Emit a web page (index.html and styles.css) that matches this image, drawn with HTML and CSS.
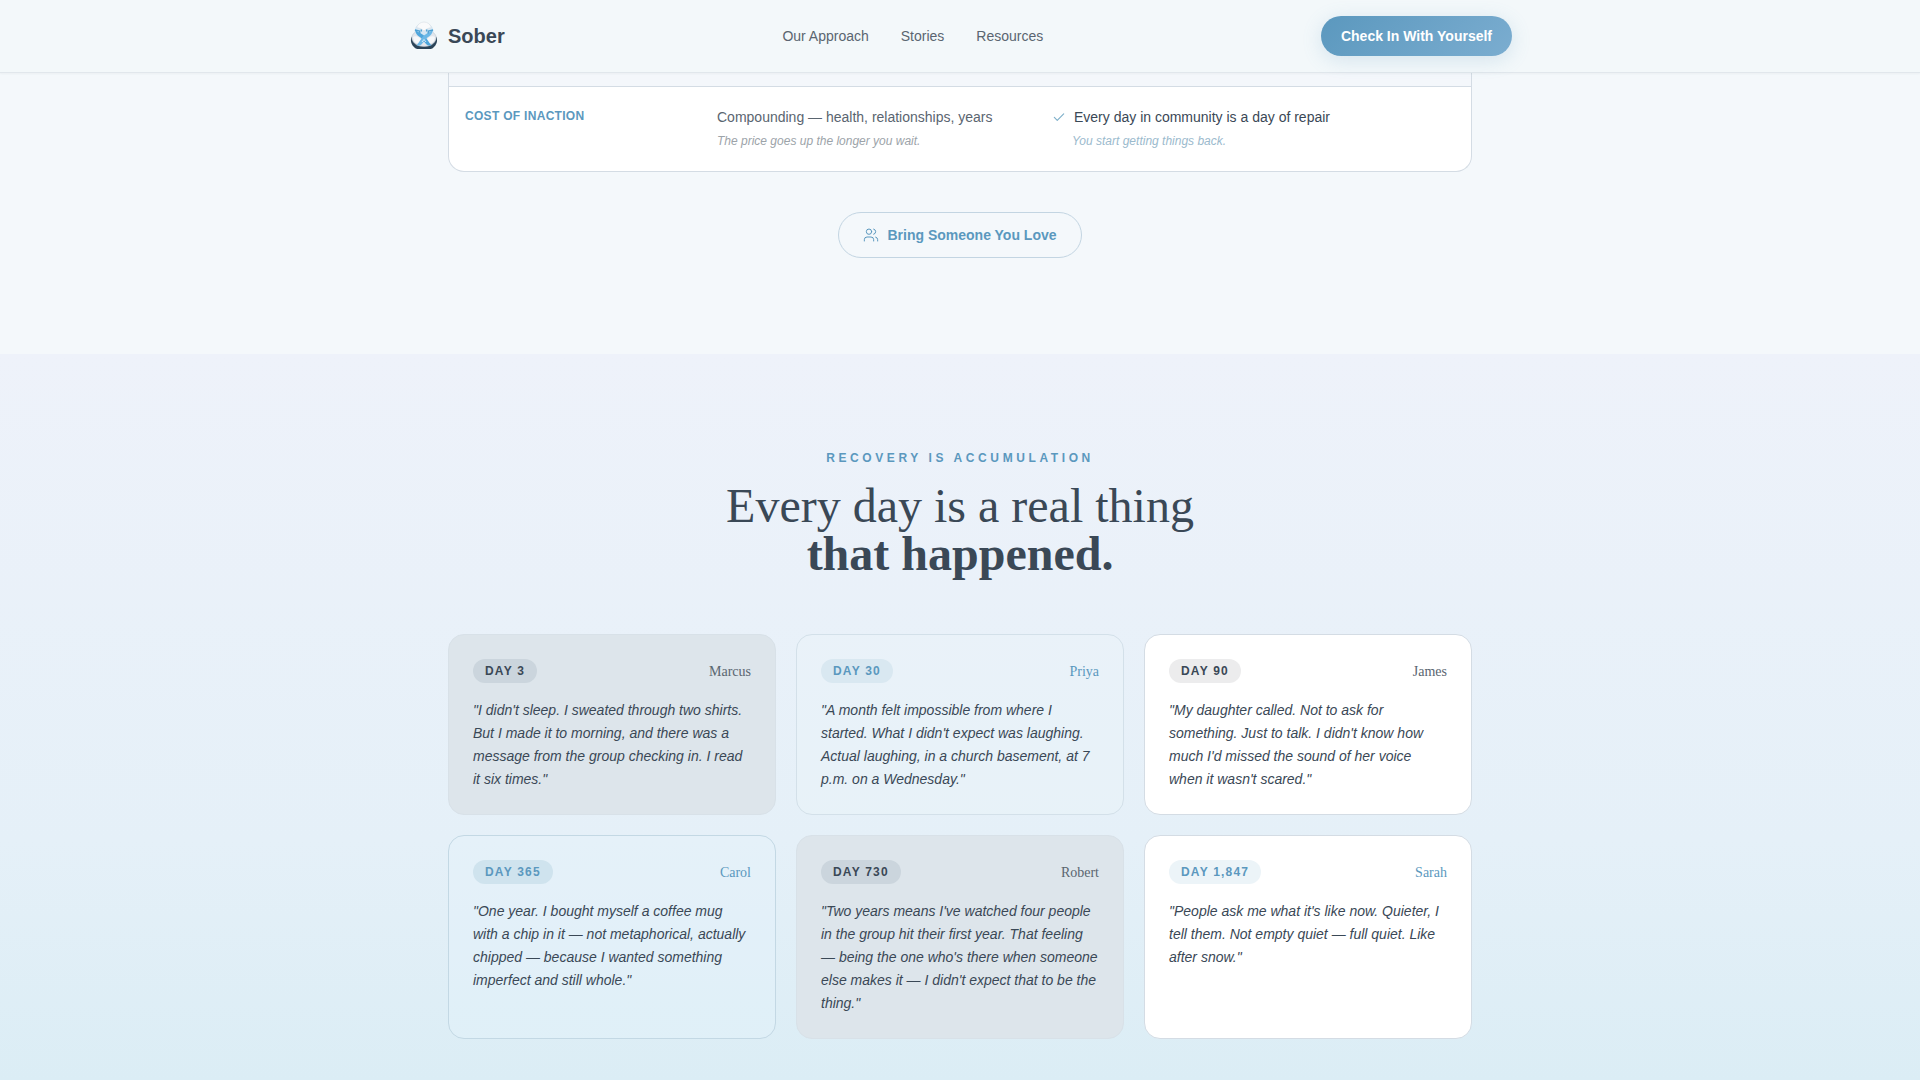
FILE: index.html
```html
<!DOCTYPE html>
<html lang="en">
<head>
<meta charset="utf-8">
<meta name="viewport" content="width=device-width, initial-scale=1">
<title>Sober</title>
<link rel="stylesheet" href="styles.css">
</head>
<body>
<header class="site-header">
  <div class="header-inner">
    <a class="brand" href="#">
      <svg class="brand-mark" viewBox="0 0 32 32" aria-hidden="true">
        <path d="M3.5 16.500c-1.500 5 0 8.500 3.500 11.500 1 .8 2 1 3 1h12c1 0 2-.2 3-1 3.500-3 5-6.500 3.500-11.500-1 5-5 9.500-12.500 9.500S4.500 21.500 3.500 16.500z" fill="#2b4458"/>
        <path d="M9 11.500c-3.500 1-5.500 4-5 7.500 1 4.500 6 7.500 12 7.500s11-3 12-7.500c.5-3.500-1.500-6.500-5-7.500z" fill="#e2e6ec" stroke="#b9c4cf" stroke-width=".6"/>
        <path d="M5 17c3-2 7 0 9 4-2 3-6 3-8 0zM27 17c-3-2-7 0-9 4 2 3 6 3 8 0z" fill="#f6f8fa"/>
        <path d="M16 3c5 0 8.800 3 9.500 7.500C25.500 14 21 17 16 19c-5-2-9.500-5-9.500-8.500C7.200 6 11 3 16 3z" fill="#d6e7f3"/>
        <path d="M8.500 7.500C10 4 12.500 2 16 2s6 2 7.500 5.500c-3 .5-5.500 1.500-7.500 3.500-2-2-4.500-3-7.500-3.500z" fill="#f9fafb" stroke="#d5dde4" stroke-width=".6"/>
        <path d="M7 9.500c1 6.500 4 6 7 9.500 2 2.200 3.500 5 6 6.500h3.500c-3-3.500-4-6-6.500-9C14.500 13.500 11 13 7 9.500z" fill="#4fa6dc"/>
        <path d="M25 9.500c-1 6.500-4 6-7 9.500-2 2.200-3.500 5-6 6.500H8.500c3-3.500 4-6 6.500-9 2.500-3 6-3.500 10-7z" fill="#6cb8e6"/>
        <path d="M7 10l4.500 1 .5 2.500M25 10l-4.500 1-.5 2.500M13 9.500l.5 2M19 9.500l-.5 2" fill="none" stroke="#4b9fd3" stroke-width="1.300"/>
        <path d="M14 22l2-2.500 2 2.500" fill="none" stroke="#eef8fd" stroke-width=".8"/>
      </svg>
      <span>Sober</span>
    </a>
    <nav class="site-nav" aria-label="Main">
      <a href="#">Our Approach</a>
      <a href="#">Stories</a>
      <a href="#">Resources</a>
    </nav>
    <button class="check-in" type="button">Check In With Yourself</button>
  </div>
</header>
<main>
  <section class="compare">
    <div class="container">
      <div class="table-frame">
        <table class="compare-table">
          <tbody>
            <tr class="previous"><td></td><td></td><td></td></tr>
            <tr>
              <th scope="row">COST OF INACTION</th>
              <td class="alone">
                <p class="point">Compounding — health, relationships, years</p>
                <p class="note">The price goes up the longer you wait.</p>
              </td>
              <td class="together">
                <p class="point">
                  <svg class="check" viewBox="0 0 24 24" aria-hidden="true"><path d="M20 5 9 16l-5-5"/></svg>
                  Every day in community is a day of repair
                </p>
                <p class="note">You start getting things back.</p>
              </td>
            </tr>
          </tbody>
        </table>
      </div>
      <button class="bring" type="button">
        <svg class="users" viewBox="0 0 24 24" aria-hidden="true"><path d="M16 21v-2a4 4 0 0 0-4-4H6a4 4 0 0 0-4 4v2"/><circle cx="9" cy="7" r="4"/><path d="M22 21v-2a4 4 0 0 0-3-3.87M16 3.13a4 4 0 0 1 0 7.75"/></svg>
        Bring Someone You Love
      </button>
    </div>
  </section>
  <section class="days">
    <div class="container">
      <p class="eyebrow">RECOVERY IS ACCUMULATION</p>
      <h2>Every day is a real thing<br><strong>that happened.</strong></h2>
      <div class="cards">
        <article class="card stone">
          <div class="card-top"><span class="badge">DAY 3</span><span class="name">Marcus</span></div>
          <blockquote>"I didn't sleep. I sweated through two shirts. But I made it to morning, and there was a message from the group checking in. I read it six times."</blockquote>
        </article>
        <article class="card mist">
          <div class="card-top"><span class="badge">DAY 30</span><span class="name">Priya</span></div>
          <blockquote>"A month felt impossible from where I started. What I didn't expect was laughing. Actual laughing, in a church basement, at 7 p.m. on a Wednesday."</blockquote>
        </article>
        <article class="card paper">
          <div class="card-top"><span class="badge">DAY 90</span><span class="name">James</span></div>
          <blockquote>"My daughter called. Not to ask for something. Just to talk. I didn't know how much I'd missed the sound of her voice when it wasn't scared."</blockquote>
        </article>
        <article class="card sky">
          <div class="card-top"><span class="badge">DAY 365</span><span class="name">Carol</span></div>
          <blockquote>"One year. I bought myself a coffee mug with a chip in it — not metaphorical, actually chipped — because I wanted something imperfect and still whole."</blockquote>
        </article>
        <article class="card stone">
          <div class="card-top"><span class="badge">DAY 730</span><span class="name">Robert</span></div>
          <blockquote>"Two years means I've watched four people in the group hit their first year. That feeling — being the one who's there when someone else makes it — I didn't expect that to be the thing."</blockquote>
        </article>
        <article class="card snow">
          <div class="card-top"><span class="badge">DAY 1,847</span><span class="name">Sarah</span></div>
          <blockquote>"People ask me what it's like now. Quieter, I tell them. Not empty quiet — full quiet. Like after snow."</blockquote>
        </article>
      </div>
    </div>
  </section>
</main>
</body>
</html>
```
FILE: styles.css
```css
:root {
  --ink: #3a4856;
  --ink-soft: #5a6570;
  --blue: #5b98be;
  --line: #d4dce4;
}

* { box-sizing: border-box; }

body {
  margin: 0;
  min-height: 100vh;
  display: flex;
  flex-direction: column;
  background: #f4f8fb;
  color: var(--ink);
  font: 14px/21px "Liberation Sans", Arial, sans-serif;
}

p, h2, blockquote { margin: 0; }

button { font: inherit; font-weight: 700; cursor: pointer; }

main { flex: 1; display: flex; flex-direction: column; }

.container { width: 100%; max-width: 1072px; margin: 0 auto; padding: 0 24px; }

/* Header */
.site-header {
  position: sticky;
  top: 0;
  z-index: 10;
  background: #f3f8fa;
  border-bottom: 1px solid #e1e7ec;
  box-shadow: 0 1px 2px rgba(58, 72, 83, 0.05);
}

.header-inner {
  max-width: 1152px;
  margin: 0 auto;
  padding: 16px 24px;
  display: flex;
  align-items: center;
  justify-content: space-between;
}

.brand {
  display: flex;
  align-items: center;
  gap: 8px;
  color: var(--ink);
  font-size: 20px;
  font-weight: 700;
  text-decoration: none;
}

.brand-mark { width: 32px; height: 32px; }

.site-nav { display: flex; gap: 32px; }

.site-nav a { color: var(--ink-soft); text-decoration: none; }

.check-in {
  height: 40px;
  padding: 0 20px;
  border: 0;
  border-radius: 20px;
  background: linear-gradient(135deg, #5b98be, #7badd0);
  box-shadow: 0 4px 20px rgba(91, 152, 190, 0.2);
  color: #fff;
}

/* Comparison */
.compare { padding-bottom: 96px; }

.compare .container { display: flex; flex-direction: column; align-items: center; gap: 40px; }

.table-frame {
  width: 100%;
  overflow: hidden;
  border: 1px solid var(--line);
  border-top: 0;
  border-radius: 0 0 16px 16px;
  background: #fff;
}

.compare-table { width: 100%; border-collapse: separate; border-spacing: 0; table-layout: fixed; }

.compare-table tr + tr > * { border-top: 1px solid var(--line); }

.compare-table th, .compare-table td { padding: 20px 16px 21px; text-align: left; vertical-align: top; }

.compare-table .previous td { height: 13px; padding: 0; background: #f4f7fb; }

.previous td:nth-child(1) { width: 252px; }
.previous td:nth-child(2) { width: 335px; }

.compare-table th { color: var(--blue); font-size: 12px; line-height: 18px; letter-spacing: 0.3px; }

.point { display: flex; align-items: center; gap: 8px; }

.note { margin-top: 4px; font-size: 12px; line-height: 18px; font-style: italic; }

.alone .point { color: var(--ink-soft); }
.alone .note { color: #9ca3a9; }
.together .note { padding-left: 20px; color: #9bbacd; }

.check, .users { fill: none; stroke: currentColor; stroke-linecap: round; stroke-linejoin: round; }
.check { width: 14px; height: 14px; stroke: #7fb0ca; stroke-width: 2; }
.users { width: 16px; height: 16px; stroke-width: 1.5; }

.bring {
  height: 46px;
  padding: 0 24px;
  display: flex;
  align-items: center;
  gap: 8px;
  border: 1px solid #c3d5e2;
  border-radius: 23px;
  background: transparent;
  color: var(--blue);
}

/* Milestones */
.days {
  flex: 1;
  padding: 96px 0 40px;
  background: linear-gradient(#eef2fa, #e5f0f8 67%, #dbedf5);
}

.eyebrow {
  color: var(--blue);
  font-size: 12px;
  font-weight: 700;
  line-height: 16px;
  letter-spacing: 0.3em;
  text-align: center;
}

h2 {
  margin: 16px 0 56px;
  font: 400 48px/48px "Liberation Serif", "Times New Roman", serif;
  text-align: center;
}

.cards { display: grid; grid-template-columns: repeat(3, 1fr); gap: 20px; }

.card { padding: 24px 24px 23px; border: 1px solid var(--line); border-radius: 16px; }

.card-top { display: flex; align-items: center; justify-content: space-between; margin-bottom: 16px; }

.badge {
  padding: 4px 12px;
  border-radius: 12px;
  font-size: 12px;
  font-weight: 700;
  line-height: 16px;
  letter-spacing: 0.1em;
}

.name { color: var(--ink-soft); font-family: "Liberation Serif", "Times New Roman", serif; }

.card blockquote { line-height: 23px; font-style: italic; }

.stone { background: #dde5eb; border-color: #d8e1e8; }
.stone .badge { background: #cbd5dd; }
.mist { background: rgba(240, 248, 252, 0.2); border-color: #d3e0e9; }
.mist .badge { background: #d9e8f1; }
.paper, .snow { background: #fff; }
.paper .badge { background: #ececed; }
.sky { background: rgba(230, 244, 252, 0.35); border-color: #c3d8e4; }
.sky .badge { background: #cfe3ee; }
.snow .badge { background: #ecf4f8; }
.mist .badge, .mist .name, .sky .badge, .sky .name, .snow .badge, .snow .name { color: var(--blue); }
```
